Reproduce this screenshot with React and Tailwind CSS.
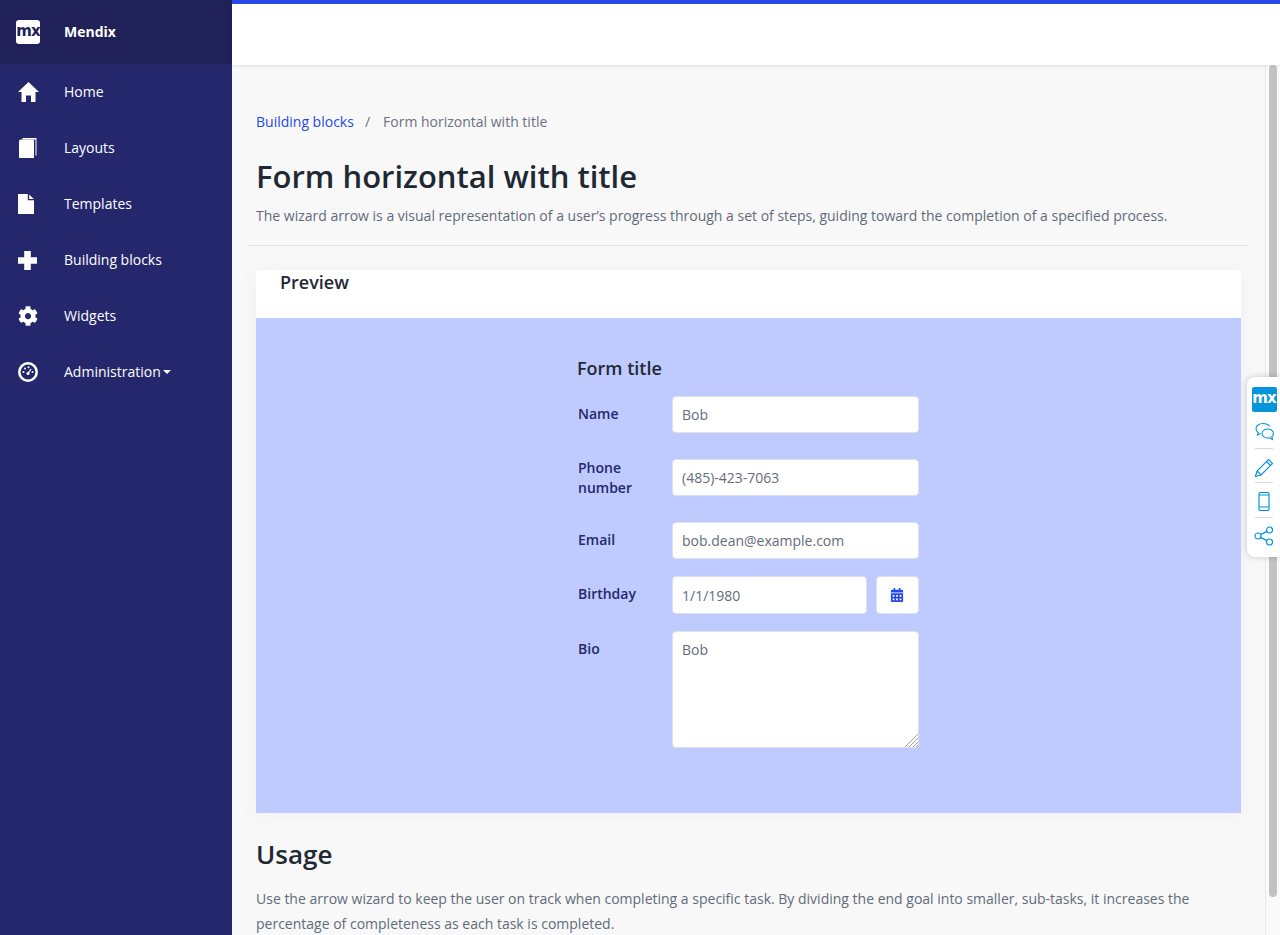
import React from 'react'
import { FaCog, FaCalendarAlt } from 'react-icons/fa'

const navItems = [
  { label: 'Home', icon: <HomeIcon /> },
  { label: 'Layouts', icon: <BookIcon /> },
  { label: 'Templates', icon: <FileIcon /> },
  { label: 'Building blocks', icon: <PlusIcon /> },
  { label: 'Widgets', icon: <FaCog className="w-[20px] h-[20px]" /> },
  { label: 'Administration', icon: <GaugeIcon />, caret: true },
]

function HomeIcon() {
  return (
    <svg width="21" height="20" viewBox="0 0 21 20" fill="currentColor">
      <path d="M10.500 0L21 10h-3.500v10H13v-6.500H8V20H3.500V10H0z" />
    </svg>
  )
}

function BookIcon() {
  return (
    <svg width="20" height="20" viewBox="0 0 20 20" fill="currentColor">
      <path d="M4.500 0H18.500v17.500h-1V1.500H4.500z" />
      <path d="M3 1.500h12.700c.2 0 .3.100.3.300V20H2c-.6 0-1-.4-1-1V3.500c0-1.100.9-2 2-2z" />
    </svg>
  )
}

function FileIcon() {
  return (
    <svg width="16" height="20" viewBox="0 0 16 20" fill="currentColor">
      <path d="M0 0h9.800v6.200H16V20H0z" />
      <path d="M11.200 .6L15.800 5h-4.600z" />
    </svg>
  )
}

function PlusIcon() {
  return (
    <svg width="19" height="19" viewBox="0 0 19 19" fill="currentColor">
      <path d="M6.200 0h6.600v6.200H19v6.600h-6.200V19H6.200v-6.200H0V6.200h6.200z" />
    </svg>
  )
}

function GaugeIcon() {
  return (
    <svg width="20" height="20" viewBox="0 0 20 20" fill="none">
      <circle cx="10" cy="10" r="8.700" stroke="currentColor" strokeWidth="2.600" />
      <circle cx="10" cy="11.500" r="1.500" fill="currentColor" />
      <path d="M10 11.500l3-4.500" stroke="currentColor" strokeWidth="1.300" />
      <circle cx="5.500" cy="10" r="1" fill="currentColor" />
      <circle cx="7" cy="6.500" r="1" fill="currentColor" />
      <circle cx="10.500" cy="5.200" r="1" fill="currentColor" />
      <circle cx="14.500" cy="10" r="1" fill="currentColor" />
    </svg>
  )
}

function Sidebar() {
  return (
    <aside className="w-[232px] shrink-0 bg-[#24276c] text-white">
      <div className="h-[64px] bg-[#1f2158] flex items-center">
        <div className="w-[24px] h-[24px] ml-[16px] rounded-[3px] bg-white flex items-center justify-center text-[#1f2158] text-[15px] leading-none font-bold tracking-[-1px] font-['DejaVu_Sans'] pb-[2px]">
          mx
        </div>
        <span className="ml-[24px] pb-[1px] text-[14px] font-bold">Mendix</span>
      </div>
      {navItems.map(item => (
        <div key={item.label} className="h-[56px] flex items-center">
          <div className="w-[64px] pl-[18px] flex items-center shrink-0">{item.icon}</div>
          <span className="pb-[1px] text-[14px]">{item.label}</span>
          {item.caret && <span className="ml-[2px] w-0 h-0 border-x-[4px] border-x-transparent border-t-[4px] border-t-white" />}
        </div>
      ))}
    </aside>
  )
}

const inputClass = 'bg-white border border-[#dfe1e8] rounded-[4px] px-[9px] text-[14px] text-[#666b7b] outline-none'
const labelClass = 'w-[95px] shrink-0 pl-[1px] text-[14px] leading-[20px] font-semibold text-[#24276c]'

function Field({ label, value, labelPad = 'pt-[8px]', className = 'mb-[26px]' }) {
  return (
    <div className={`flex h-[37px] ${className}`}>
      <label className={`${labelClass} pr-[20px] ${labelPad}`}>{label}</label>
      <input readOnly defaultValue={value} className={inputClass + ' w-[247px] h-[37px]'} />
    </div>
  )
}

function Form() {
  return (
    <div className="w-[342px] ml-[321px] pt-[38px] pb-[65px]">
      <h3 className="text-[18px] leading-[25px] font-semibold text-[#1f2933] mb-[15px]">Form title</h3>
      <Field label="Name" value="Bob" />
      <Field label="Phone number" value="(485)-423-7063" labelPad="-mt-[1px]" />
      <Field label="Email" value="bob.dean@example.com" className="mb-[17px]" />
      <div className="flex mb-[17px]">
        <label className={`${labelClass} pt-[8px]`}>Birthday</label>
        <input readOnly defaultValue="1/1/1980" className={inputClass + ' w-[195px] h-[38px]'} />
        <button className="ml-[9px] w-[43px] h-[38px] bg-white border border-[#dfe1e8] rounded-[4px] flex items-center justify-center text-[#264ae5]">
          <FaCalendarAlt className="w-[14px] h-[14px] -ml-[1px]" />
        </button>
      </div>
      <div className="flex">
        <label className={`${labelClass} pt-[8px]`}>Bio</label>
        <div className="relative w-[247px] h-[117px]">
          <textarea readOnly defaultValue="Bob" className={inputClass + ' block w-full h-full py-[8px] leading-[20px] resize-none'} />
          {/* resize grip */}
          <svg className="absolute right-[1px] bottom-[1px]" width="14" height="14" viewBox="0 0 14 14" stroke="#8a8a8a" strokeWidth="0.800">
            <path d="M1 14L14 1M5 14l9-9M9 14l5-5M12 14l2-2" />
          </svg>
        </div>
      </div>
    </div>
  )
}

function FeedbackWidget() {
  return (
    <div className="absolute right-0 top-[377px] w-[33px] h-[180px] bg-white rounded-l-[8px] shadow-[0_0_6px_rgba(0,0,0,0.2)] flex flex-col items-center text-[#0595db]">
      <div className="mt-[10px] ml-[1px] w-[25px] h-[25px] rounded-[2px] bg-[#0595db] text-white text-[15px] leading-none font-bold tracking-[-1px] font-['DejaVu_Sans'] flex items-center justify-center pb-[2px]">
        mx
      </div>
      <svg className="mt-[10px] ml-[1px]" width="21" height="21" viewBox="0 0 21 21" fill="none" stroke="currentColor" strokeWidth="1.100">
        <path d="M9 1.500c-4 0-7 2.300-7 5.200 0 1.600.9 3 2.400 4l-.9 2.300 3.200-1.500" />
        <path d="M13.500 7c-3 0-5.500 2-5.500 4.500S10.500 16 13.500 16c.7 0 1.300-.1 1.900-.3l3.100 1.800-.7-3c1.100-.8 1.700-2 1.700-3C19.500 9 16.500 7 13.500 7z" />
        <path d="M15.700 4.500C14.500 2.700 12 1.500 9 1.500" />
      </svg>
      <div className="w-[18px] mt-[5px] border-t border-[#d5d7da]" />
      <svg className="mt-[9px]" width="20" height="20" viewBox="0 0 20 20" fill="none" stroke="currentColor" strokeWidth="1.200">
        <path d="M14.500 1.500l4 4L7 17l-5.500 1.500L3 13z" />
        <path d="M12.500 3.500l4 4M3 13l4 4" />
      </svg>
      <div className="w-[18px] mt-[4px] border-t border-[#d5d7da]" />
      <svg className="mt-[9px]" width="12" height="19" viewBox="0 0 12 19" fill="none" stroke="currentColor" strokeWidth="1.200">
        <rect x="1" y="0.500" width="10" height="18" rx="1.500" />
        <path d="M1 3h10M1 15h10" />
      </svg>
      <div className="w-[18px] mt-[6px] border-t border-[#d5d7da]" />
      <svg className="mt-[8px] ml-[1px]" width="20" height="20" viewBox="0 0 20 20" fill="none" stroke="currentColor" strokeWidth="1.200">
        <circle cx="4" cy="10" r="3" />
        <circle cx="15.500" cy="4" r="3" />
        <circle cx="15.500" cy="16" r="3" />
        <path d="M6.700 8.600l6.100-3.200M6.700 11.400l6.100 3.200" />
      </svg>
    </div>
  )
}

export default function App() {
  return (
    <div className="relative h-screen flex overflow-hidden font-['Open_Sans',sans-serif] bg-[#f8f8f8]">
      <Sidebar />
      <div className="flex-1 min-w-0 flex flex-col">
        <div className="h-[65px] shrink-0 bg-white border-t-[4px] border-[#264ae5] shadow-[0_1px_3px_rgba(0,0,0,0.1)] relative" />
        <div className="flex-1 min-h-0 flex">
          <main className="flex-1 min-w-0 px-[24px] pt-[46px] overflow-hidden">
            <div className="flex items-center text-[14px] leading-[22px]">
              <span className="text-[#264ae5]">Building blocks</span>
              <span className="text-[#6c7180] ml-[11px]">/</span>
              <span className="text-[#6c7180] ml-[13px]">Form horizontal with title</span>
            </div>
            <h1 className="mt-[21px] text-[31px] leading-[44px] font-semibold text-[#1f2933]">Form horizontal with title</h1>
            <p className="mt-[7px] text-[14px] leading-[22px] text-[#5f6b7a]">
              The wizard arrow is a visual representation of a user’s progress through a set of steps, guiding toward the completion of a specified process.
            </p>
            <div className="-mx-[8px] mt-[18px] border-t border-[#e2e3e5]" />
            <section className="mt-[24px] rounded-t-[4px] bg-white shadow-[0_2px_20px_rgba(0,0,0,0.04)]">
              <div className="h-[48px] px-[24px] text-[18px] leading-[25px] font-semibold text-[#1f2933]">Preview</div>
              <div className="bg-[#bfcaff]">
                <Form />
              </div>
            </section>
            <h2 className="mt-[21px] text-[26px] leading-[40px] font-semibold text-[#1f2933]">Usage</h2>
            <p className="mt-[12px] text-[14px] leading-[25px] text-[#5f6b7a]">
              Use the arrow wizard to keep the user on track when completing a specific task. By dividing the end goal into smaller, sub-tasks, it increases the percentage of completeness as each task is completed.
            </p>
          </main>
          <div className="w-[15px] shrink-0 bg-[#fafafa] border-l border-[#e8e8e8] px-[3px]">
            <div className="w-[8px] h-[832px] rounded-full bg-[#c2c2c2]" />
          </div>
        </div>
      </div>
      <FeedbackWidget />
    </div>
  )
}
